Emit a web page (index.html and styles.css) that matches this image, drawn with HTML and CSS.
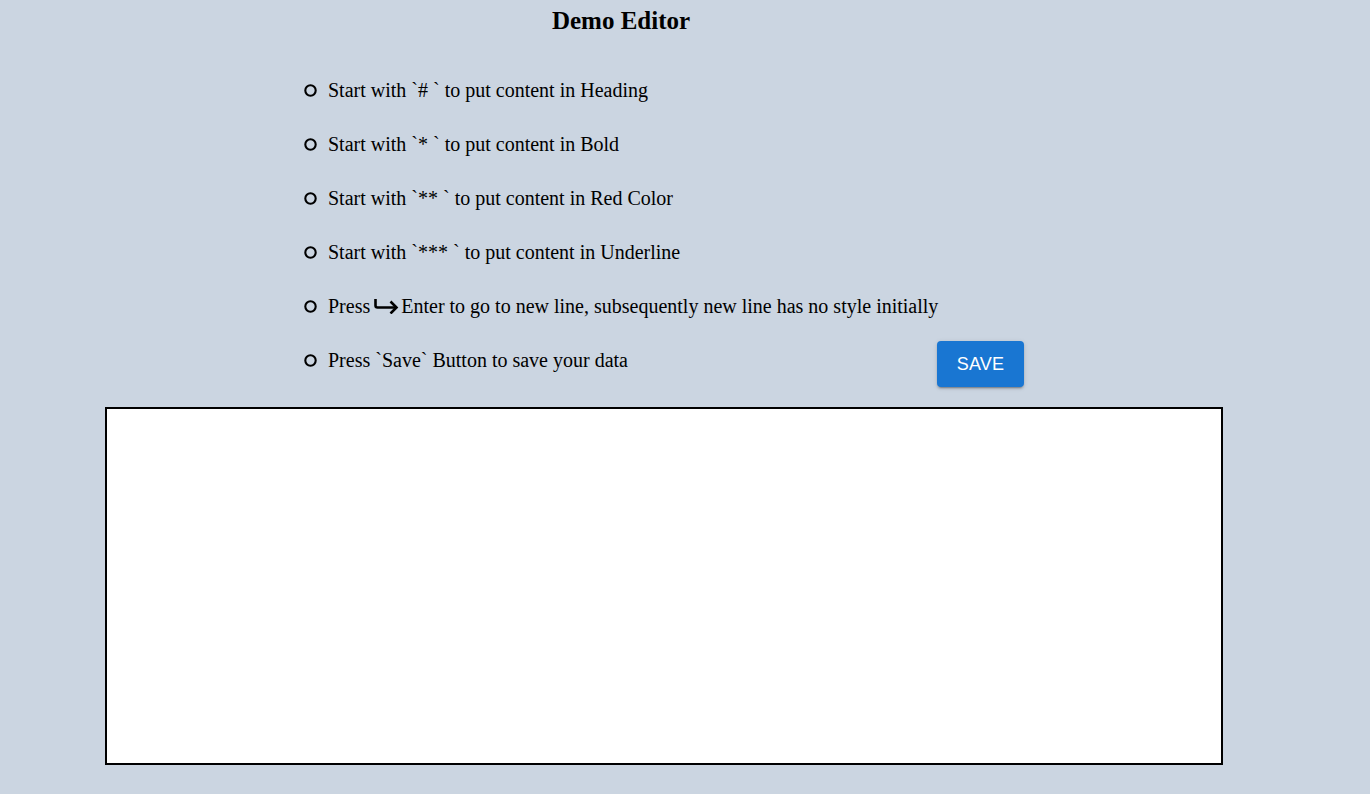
FILE: index.html
```html
<!DOCTYPE html>
<html lang="en">
<head>
<meta charset="utf-8">
<title>Demo Editor</title>
<link rel="stylesheet" href="styles.css">
</head>
<body>
  <div class="header">
    <h1 class="title">Demo Editor</h1>
  </div>
  <div class="main">
    <ul class="rules">
      <li><svg class="bullet" viewBox="0 0 13 13"><circle cx="6.5" cy="6.5" r="5.2" fill="none" stroke="#000" stroke-width="2.1"/></svg><span>Start with `# ` to put content in Heading</span></li>
      <li><svg class="bullet" viewBox="0 0 13 13"><circle cx="6.5" cy="6.5" r="5.2" fill="none" stroke="#000" stroke-width="2.1"/></svg><span>Start with `* ` to put content in Bold</span></li>
      <li><svg class="bullet" viewBox="0 0 13 13"><circle cx="6.5" cy="6.5" r="5.2" fill="none" stroke="#000" stroke-width="2.1"/></svg><span>Start with `** ` to put content in Red Color</span></li>
      <li><svg class="bullet" viewBox="0 0 13 13"><circle cx="6.5" cy="6.5" r="5.2" fill="none" stroke="#000" stroke-width="2.1"/></svg><span>Start with `*** ` to put content in Underline</span></li>
      <li><svg class="bullet" viewBox="0 0 13 13"><circle cx="6.5" cy="6.5" r="5.2" fill="none" stroke="#000" stroke-width="2.1"/></svg><span>Press<svg class="enter" viewBox="0 0 26 16"><path d="M2.5 1v6.5q0 2 2 2H23" fill="none" stroke="#000" stroke-width="2.6"/><path d="M17.5 3.5L23.5 9.5L17.5 15.5" fill="none" stroke="#000" stroke-width="2.6"/></svg>Enter to go to new line, subsequently new line has no style initially</span></li>
      <li><svg class="bullet" viewBox="0 0 13 13"><circle cx="6.5" cy="6.5" r="5.2" fill="none" stroke="#000" stroke-width="2.1"/></svg><span>Press `Save` Button to save your data</span></li>
    </ul>
    <button class="save" type="button">SAVE</button>
  </div>
  <div class="editor" contenteditable="true"></div>
</body>
</html>
```

FILE: styles.css
```css
html, body {
  margin: 0;
  padding: 0;
}

body {
  background: #cbd5e1;
  font-family: "Liberation Serif", "Times New Roman", serif;
  color: #000;
  min-height: 794px;
}

.header {
  margin-left: 305px;
  width: 632px;
  padding-top: 7px;
}

.title {
  margin: 0;
  text-align: center;
  font-size: 25px;
  line-height: 28px;
  font-weight: bold;
}

.main {
  display: flex;
  margin-left: 304px;
  margin-top: 28px;
}

.rules {
  list-style: none;
  margin: 0;
  padding: 0;
  width: 633px;
}

.rules li {
  display: flex;
  align-items: center;
  height: 54px;
  font-size: 20px;
  line-height: 54px;
  white-space: nowrap;
}

.bullet {
  width: 13px;
  height: 13px;
  margin-right: 11px;
  flex: none;
}

.enter {
  width: 26px;
  height: 16px;
  margin: 0 2px 0 3px;
  vertical-align: -1px;
}

.save {
  align-self: flex-end;
  width: 87px;
  height: 46px;
  border: none;
  border-radius: 4px;
  background: #1976d2;
  color: #fff;
  font-family: "Liberation Sans", Arial, sans-serif;
  font-size: 18px;
  font-weight: 400;
  letter-spacing: 0.2px;
  padding: 0;
  box-shadow: 0 3px 1px -2px rgba(0,0,0,0.2), 0 2px 2px 0 rgba(0,0,0,0.14), 0 1px 5px 0 rgba(0,0,0,0.12);
  cursor: pointer;
}

.editor {
  margin-left: 105px;
  margin-top: 20px;
  width: 1114px;
  height: 354px;
  border: 2px solid #000;
  background: #fff;
  outline: none;
}
```
